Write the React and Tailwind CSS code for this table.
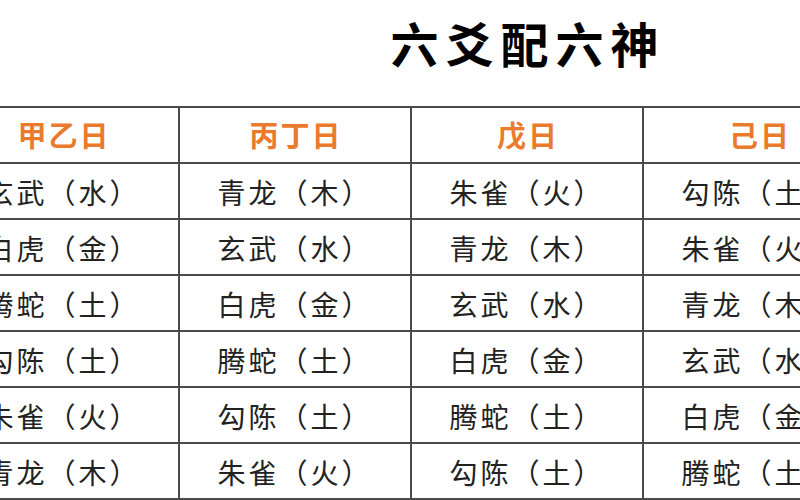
const headers = ["甲乙日", "丙丁日", "戊日", "己日"];

const rows = [
  ["玄武（水）", "青龙（木）", "朱雀（火）", "勾陈（土）"],
  ["白虎（金）", "玄武（水）", "青龙（木）", "朱雀（火）"],
  ["腾蛇（土）", "白虎（金）", "玄武（水）", "青龙（木）"],
  ["勾陈（土）", "腾蛇（土）", "白虎（金）", "玄武（水）"],
  ["朱雀（火）", "勾陈（土）", "腾蛇（土）", "白虎（金）"],
  ["青龙（木）", "朱雀（火）", "勾陈（土）", "腾蛇（土）"],
];

export default function App() {
  return (
    <div
      className="h-[500px] w-[800px] overflow-hidden bg-white"
      style={{ fontFamily: '"Noto Sans CJK SC", "Noto Sans", sans-serif' }}
    >
      <div className="flex h-[106px] items-center justify-center pl-[256px] pb-[22px]">
        <h1 className="text-[48px] font-bold leading-none tracking-[7px] text-black">
          六爻配六神
        </h1>
      </div>

      <div className="ml-[-52px] grid w-[930px] grid-cols-[repeat(4,232px)] border-t-2 border-[#4a4a4a]">
        {headers.map((h) => (
          <div
            key={h}
            className="flex h-[56px] items-center justify-center border-b-2 border-r-2 border-[#4a4a4a] pl-[2px] text-[29px] font-bold tracking-[2px] text-[#ea7a2c]"
          >
            {h}
          </div>
        ))}
        {rows.map((r, i) =>
          r.map((c, j) => (
            <div
              key={i + "-" + j}
              className="flex h-[56px] items-center justify-center border-b-2 border-r-2 border-[#4a4a4a] pt-[1px] text-[28px] tracking-[3px] text-[#222]"
            >
              {c}
            </div>
          ))
        )}
      </div>
    </div>
  );
}
